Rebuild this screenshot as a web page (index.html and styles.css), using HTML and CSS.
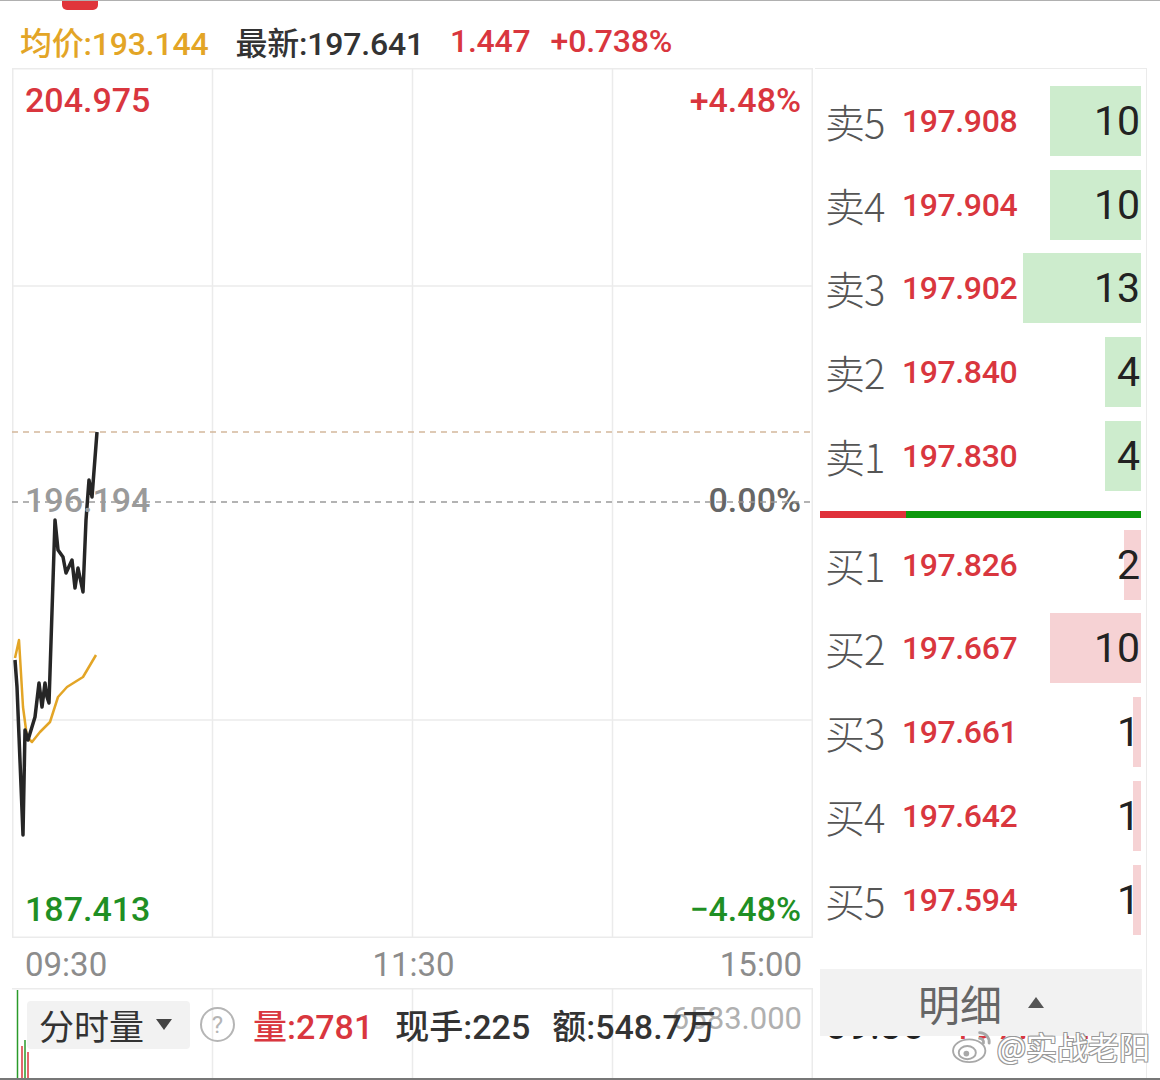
FILE: index.html
```html
<!DOCTYPE html>
<html lang="zh-CN">
<head>
  <meta charset="UTF-8">
  <title>分时</title>
  <link rel="stylesheet" href="styles.css">
</head>
<body>
<div class="screen">

  <div class="tab-mark"></div>
  <div class="quote">
    <span class="avg">均价:193.144</span>
    <span class="last">最新:197.641</span>
    <span class="up">1.447</span>
    <span class="up pct">+0.738%</span>
  </div>

  <div class="main">
    <div class="left">
      <div class="chart">
        <svg class="plot" width="801" height="870" viewBox="0 0 801 870">
          <g stroke="#ebebeb" stroke-width="1.5" fill="none">
            <line x1="0.75" y1="0" x2="0.75" y2="870"/>
            <line x1="200.5" y1="0" x2="200.5" y2="870"/>
            <line x1="400.5" y1="0" x2="400.5" y2="870"/>
            <line x1="600.5" y1="0" x2="600.5" y2="870"/>
            <line x1="800.25" y1="0" x2="800.25" y2="870"/>
            <line x1="0" y1="0.75" x2="801" y2="0.75"/>
            <line x1="0" y1="218" x2="801" y2="218"/>
            <line x1="0" y1="652" x2="801" y2="652"/>
            <line x1="0" y1="869.25" x2="801" y2="869.25"/>
          </g>
          <line x1="0" y1="364" x2="801" y2="364" stroke="#d4b89c" stroke-width="1.5" stroke-dasharray="6 5"/>
          <polyline fill="none" stroke="#e3a526" stroke-width="2.5" stroke-linejoin="round"
            points="3,590 7,572 11,639 15,669 20,674 28,664 38,654 46,629 55,619 71,609 84,587"/>
          <polyline fill="none" stroke="#262626" stroke-width="3.5" stroke-linejoin="round"
            points="3,592 5,619 11,767 13,662 16,672 23,649 27,615 30,639 33,615 35,629 37,635 43,452 46,482 51,489 54,505 60,492 63,520 66,500 71,524 74,452 77,412 80,429 85,364"/>
        </svg>
        <div class="scale">
          <div class="scale-row"><span class="up">204.975</span><span class="up">+4.48%</span></div>
          <div class="scale-row mid"><span>196.194</span><span class="zero">0.00%</span></div>
          <div class="scale-row"><span class="down">187.413</span><span class="down">−4.48%</span></div>
        </div>
        <svg class="midline" width="801" height="4" viewBox="0 0 801 4">
          <line x1="0" y1="2" x2="801" y2="2" stroke="#9a9a9a" stroke-width="1.5" stroke-dasharray="6 5"/>
        </svg>
      </div>

      <div class="time-axis">
        <span>09:30</span>
        <span>11:30</span>
        <span>15:00</span>
      </div>

      <div class="volume">
        <svg class="vol-grid" width="801" height="92" viewBox="0 0 801 92">
          <line x1="0" y1="0.75" x2="801" y2="0.75" stroke="#ebebeb" stroke-width="1.5"/>
          <g stroke="#ebebeb" stroke-width="1.5">
            <line x1="200.5" y1="0" x2="200.5" y2="92"/>
            <line x1="400.5" y1="0" x2="400.5" y2="92"/>
            <line x1="600.5" y1="0" x2="600.5" y2="92"/>
            <line x1="800.25" y1="0" x2="800.25" y2="92"/>
          </g>
          <line x1="5.5" y1="2" x2="5.5" y2="92" stroke="#2a9a2a" stroke-width="1.5"/>
          <line x1="10" y1="58" x2="10" y2="92" stroke="#d9363e" stroke-width="1.5"/>
          <line x1="13" y1="52" x2="13" y2="92" stroke="#2a9a2a" stroke-width="1.5"/>
          <line x1="16" y1="64" x2="16" y2="92" stroke="#d9363e" stroke-width="1.5"/>
        </svg>
        <span class="vol-max">6583.000</span>
        <div class="vol-bar">
          <div class="mode">分时量<span class="caret"></span></div>
          <span class="help">?</span>
          <span class="up">量:2781</span>
          <span>现手:225</span>
          <span>额:548.7万</span>
        </div>
      </div>
    </div>

    <div class="book">
      <div class="side">
        <div class="lvl"><span class="name">卖5</span><span class="price">197.908</span><span class="qty ask" style="--w:91px">10</span></div>
        <div class="lvl"><span class="name">卖4</span><span class="price">197.904</span><span class="qty ask" style="--w:91px">10</span></div>
        <div class="lvl"><span class="name">卖3</span><span class="price">197.902</span><span class="qty ask" style="--w:118px">13</span></div>
        <div class="lvl"><span class="name">卖2</span><span class="price">197.840</span><span class="qty ask" style="--w:36px">4</span></div>
        <div class="lvl"><span class="name">卖1</span><span class="price">197.830</span><span class="qty ask" style="--w:36px">4</span></div>
      </div>
      <div class="ratio"><div class="ratio-buy" style="width:86px"></div></div>
      <div class="side">
        <div class="lvl"><span class="name">买1</span><span class="price">197.826</span><span class="qty bid" style="--w:17px">2</span></div>
        <div class="lvl"><span class="name">买2</span><span class="price">197.667</span><span class="qty bid" style="--w:91px">10</span></div>
        <div class="lvl"><span class="name">买3</span><span class="price">197.661</span><span class="qty bid" style="--w:8px">1</span></div>
        <div class="lvl"><span class="name">买4</span><span class="price">197.642</span><span class="qty bid" style="--w:8px">1</span></div>
        <div class="lvl"><span class="name">买5</span><span class="price">197.594</span><span class="qty bid" style="--w:8px">1</span></div>
      </div>
      <div class="detail">明细<span class="caret-up"></span></div>
      <div class="peek"><span class="peek-time">09:30</span><span class="up">197.641 197.641</span></div>
    </div>
  </div>

  <div class="watermark">
    <svg width="44" height="38" viewBox="0 0 46 40">
      <ellipse cx="19" cy="25" rx="17" ry="12" fill="#fff" stroke="#a8a8a8" stroke-width="2"/>
      <ellipse cx="17" cy="27" rx="9" ry="7" fill="#fff" stroke="#a8a8a8" stroke-width="2"/>
      <circle cx="16" cy="28" r="3" fill="#a8a8a8"/>
      <path d="M30 6 a10 10 0 0 1 10 11" fill="none" stroke="#a8a8a8" stroke-width="3" stroke-linecap="round"/>
      <path d="M30 12 a4 4 0 0 1 4 5" fill="none" stroke="#a8a8a8" stroke-width="3" stroke-linecap="round"/>
    </svg>
    <span>@实战老阳</span>
  </div>

  <div class="base-line"></div>
</div>
</body>
</html>
```

FILE: styles.css
```css
html, body {
  margin: 0;
  padding: 0;
  background: #ffffff;
}
body {
  font-family: Roboto, "Noto Sans CJK SC", sans-serif;
  color: #333;
}
.screen {
  position: relative;
  width: 1160px;
  height: 1080px;
  overflow: hidden;
  border-top: 1px solid #b0b0b0;
  box-sizing: border-box;
}
.up { color: #d9363e; }
.down { color: #1f8f24; }

.tab-mark {
  width: 36px;
  height: 9px;
  margin-left: 62px;
  background: #e0353b;
  border-radius: 0 0 5px 5px;
}
.quote {
  height: 58px;
  display: flex;
  align-items: center;
  padding-left: 20px;
  padding-top: 4px;
  box-sizing: border-box;
  font-size: 32px;
  font-weight: 500;
  letter-spacing: -0.2px;
}
.quote span { margin-right: 20px; }
.quote .avg { color: #e3a526; margin-right: 27px; }
.quote .last { color: #333; margin-right: 26px; }

.main {
  display: flex;
}
.left {
  width: 815px;
  padding-left: 12px;
  box-sizing: border-box;
}
.chart {
  position: relative;
  width: 801px;
  height: 870px;
}
.plot { display: block; }
.scale {
  position: absolute;
  inset: 0;
  display: flex;
  flex-direction: column;
  justify-content: space-between;
  padding: 12px 12px 9px 13px;
  font-size: 34px;
  font-weight: 500;
}
.scale-row {
  display: flex;
  justify-content: space-between;
  line-height: 40px;
}
.scale-row.mid { color: #9a9a9a; margin-bottom: 10px; }
.scale-row.mid .zero { color: #666; }
.midline {
  position: absolute;
  left: 0;
  top: 432px;
}

.time-axis {
  height: 50px;
  display: flex;
  justify-content: space-between;
  align-items: center;
  padding: 2px 13px 0 13px;
  box-sizing: border-box;
  font-size: 33px;
  color: #8c8c8c;
}
.volume {
  position: relative;
  height: 92px;
}
.vol-grid {
  position: absolute;
  left: 0;
  top: 0;
}
.vol-max {
  position: absolute;
  right: 13px;
  top: 12px;
  font-size: 31px;
  color: #b0b0b0;
}
.vol-bar {
  position: relative;
  display: flex;
  align-items: center;
  padding: 12px 0 0 15px;
  font-size: 34px;
  font-weight: 500;
  color: #333;
}
.mode {
  display: flex;
  align-items: center;
  width: 163px;
  height: 48px;
  padding-left: 12px;
  box-sizing: border-box;
  background: #f2f2f2;
  border-radius: 4px;
  font-size: 35px;
  font-weight: 400;
  color: #333;
}
.caret {
  width: 0;
  height: 0;
  margin-left: 12px;
  border-left: 8px solid transparent;
  border-right: 8px solid transparent;
  border-top: 11px solid #444;
}
.help {
  width: 31px;
  height: 31px;
  margin: 0 18px 0 10px;
  border: 2px solid #b5b5b5;
  border-radius: 50%;
  display: flex;
  align-items: center;
  justify-content: center;
  font-size: 24px;
  font-weight: 400;
  color: #b5b5b5;
}
.vol-bar span + span { margin-right: 22px; }

.book {
  width: 332px;
  border-top: 1.5px solid #ebebeb;
  border-right: 1.5px solid #ebebeb;
  padding-top: 17px;
  height: 1012px;
  box-sizing: border-box;
}
.side {
  display: flex;
  flex-direction: column;
  gap: 13.7px;
}
.lvl {
  display: flex;
  align-items: center;
  height: 70px;
  padding: 0 5px 0 10px;
}
.name {
  width: 77px;
  font-size: 40px;
  color: #555;
  font-family: "Noto Sans CJK SC", sans-serif;
  font-weight: 300;
  letter-spacing: -1px;
}
.price {
  font-size: 32px;
  font-weight: 500;
  color: #d9363e;
  letter-spacing: -0.4px;
}
.qty {
  flex: 1;
  align-self: stretch;
  display: flex;
  align-items: center;
  justify-content: flex-end;
  padding-right: 1px;
  font-size: 41px;
  color: #222;
  background-repeat: no-repeat;
  background-position: right center;
  background-size: var(--w) 100%;
}
.ask { background-image: linear-gradient(#cdeccd, #cdeccd); }
.bid { background-image: linear-gradient(#f6d2d4, #f6d2d4); }
.ratio {
  height: 7px;
  margin: 20px 5px 12px 5px;
  background: #0c990c;
}
.ratio-buy {
  height: 100%;
  background: #e0303a;
}
.detail {
  margin: 34px 4px 0 5px;
  height: 67px;
  background: #f2f2f2;
  display: flex;
  align-items: center;
  justify-content: center;
  font-size: 42px;
  color: #666;
  font-family: "Noto Sans CJK SC", sans-serif;
}
.caret-up {
  width: 0;
  height: 0;
  margin-left: 26px;
  border-left: 8px solid transparent;
  border-right: 8px solid transparent;
  border-bottom: 11px solid #555;
}
.peek {
  height: 9px;
  overflow: hidden;
  display: flex;
  gap: 26px;
  padding-left: 10px;
  font-size: 40px;
  line-height: 40px;
  color: #222;
}
.peek span { margin-top: -30px; }

.watermark {
  position: absolute;
  right: 10px;
  bottom: 12px;
  display: flex;
  align-items: center;
  gap: 2px;
  font-size: 31px;
  font-family: "Noto Sans CJK SC", sans-serif;
  color: #fff;
  text-shadow: -1px -1px 0 #999, 1px -1px 0 #999, -1px 1px 0 #999, 1px 1px 0 #999;
}
.base-line {
  position: absolute;
  left: 0;
  right: 0;
  bottom: 0;
  height: 2px;
  background: #777;
}
```
